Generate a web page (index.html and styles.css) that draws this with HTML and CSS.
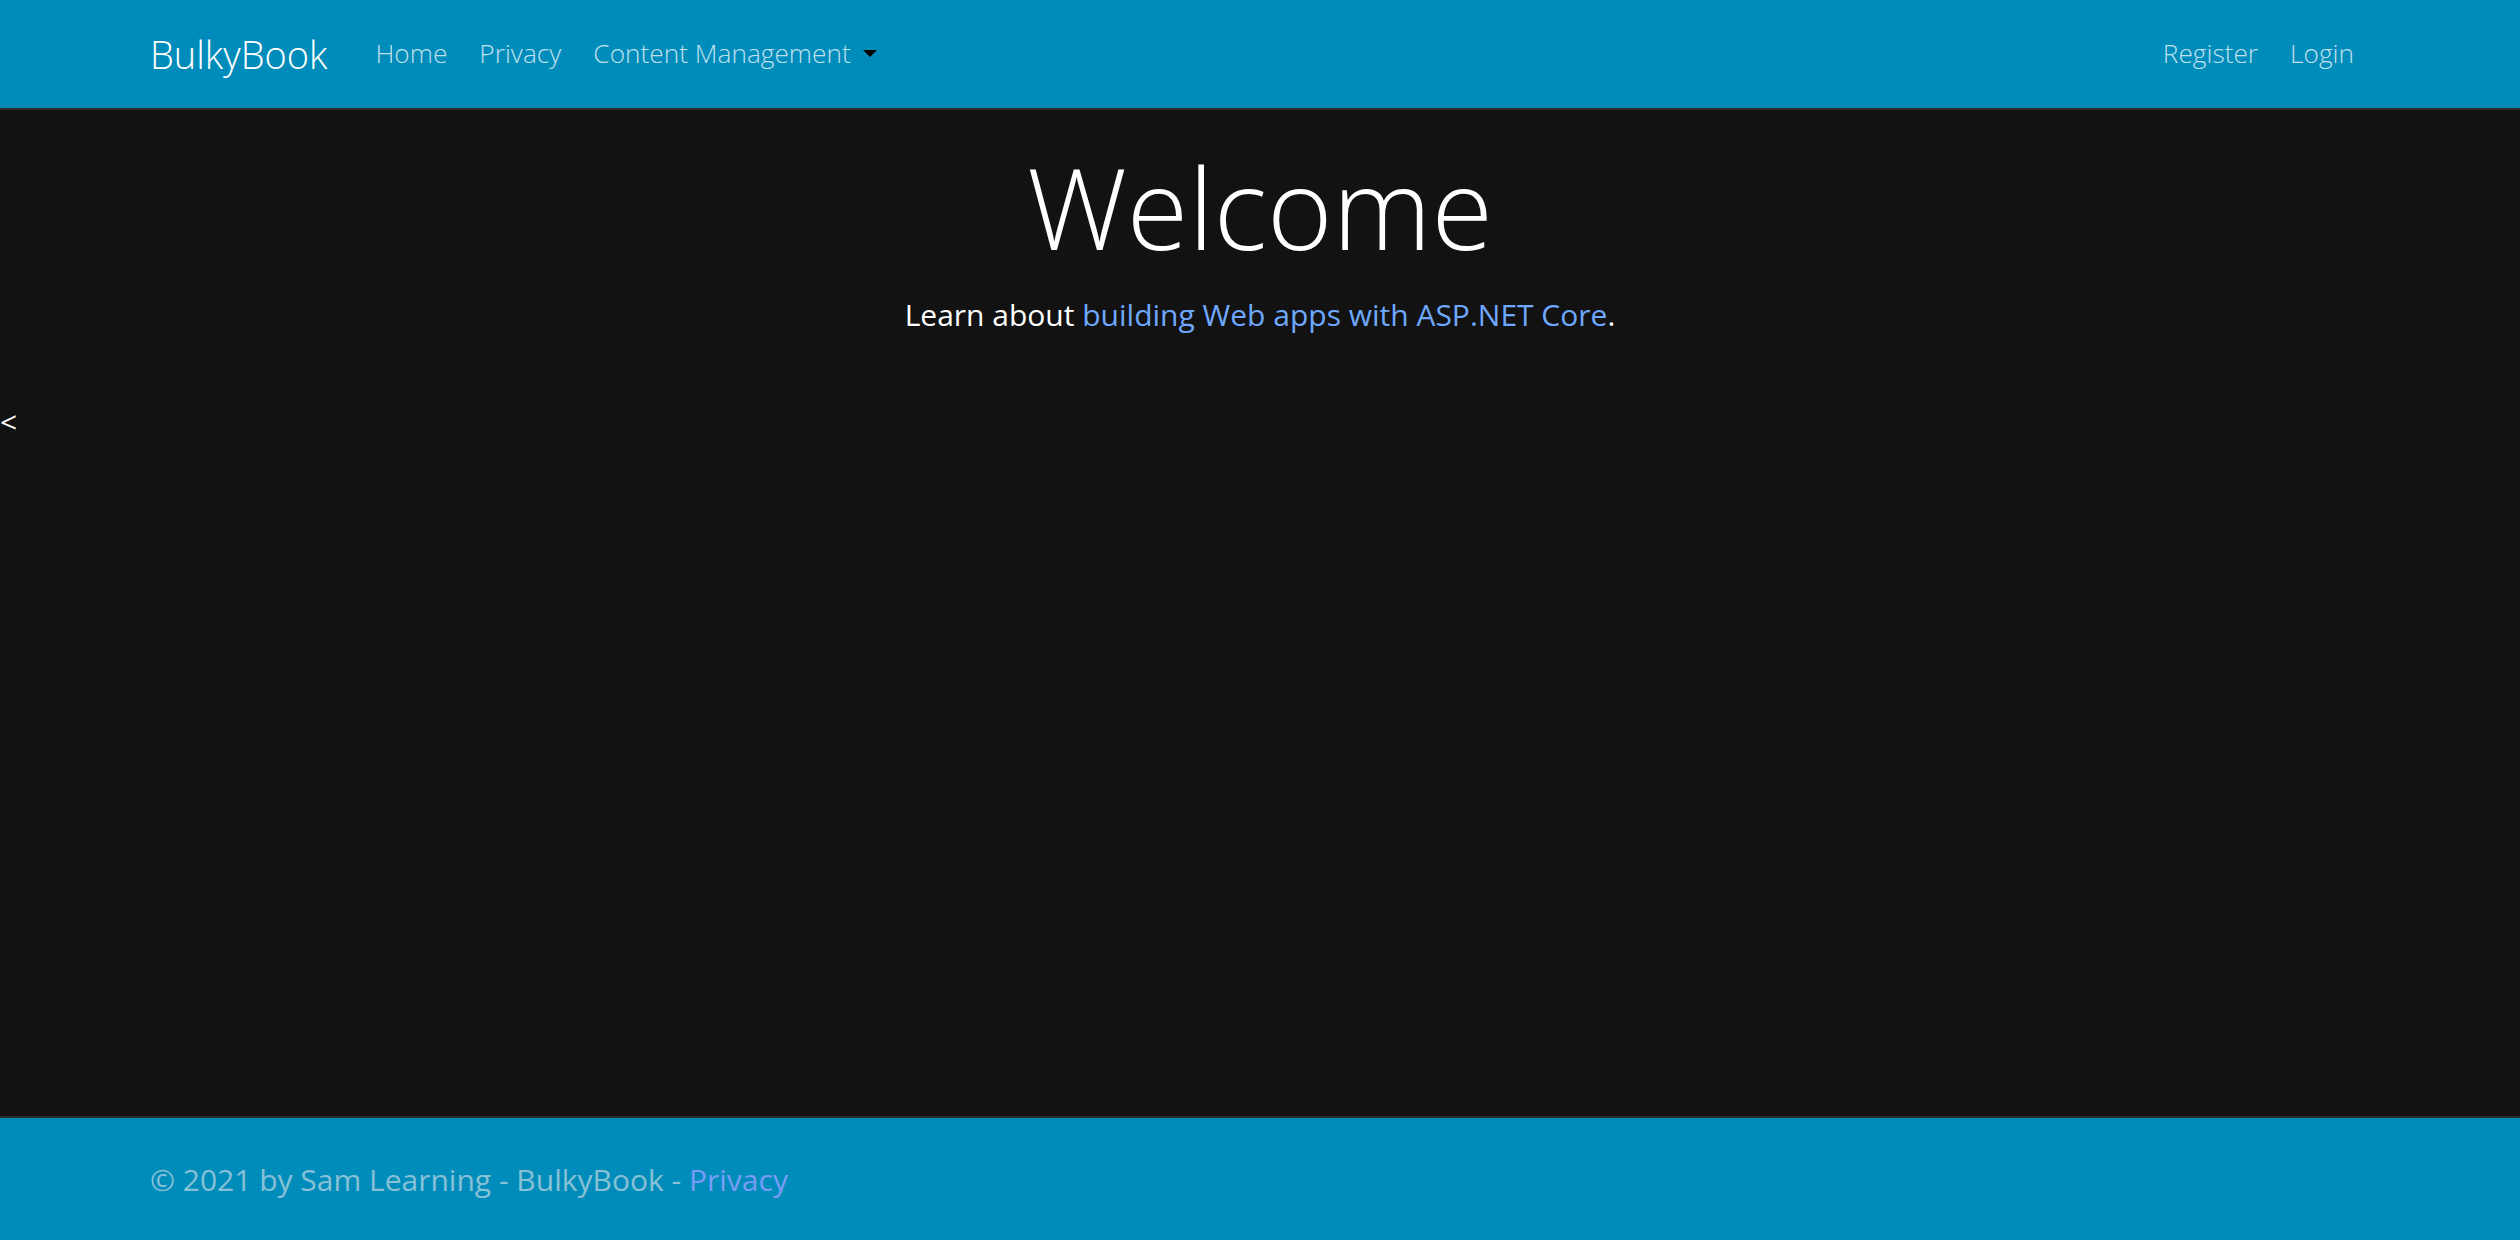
FILE: index.html
```html
<!DOCTYPE html>
<html lang="en">
<head>
<meta charset="utf-8">
<title>Home Page - BulkyBook</title>
<link rel="stylesheet" href="styles.css">
</head>
<body>
<header>
  <nav class="navbar">
    <div class="container nav-inner">
      <a class="brand" href="#">BulkyBook</a>
      <ul class="nav nav-left">
        <li><a class="nav-link" href="#">Home</a></li>
        <li><a class="nav-link" href="#">Privacy</a></li>
        <li><a class="nav-link dropdown-toggle" href="#">Content Management</a></li>
      </ul>
      <ul class="nav nav-right">
        <li><a class="nav-link" href="#">Register</a></li>
        <li><a class="nav-link" href="#">Login</a></li>
      </ul>
    </div>
  </nav>
</header>
<div class="container">
  <main class="main">
    <div class="text-center">
      <h1 class="display">Welcome</h1>
      <p class="lead-text">Learn about <a class="link" href="#">building Web apps with ASP.NET Core</a>.</p>
    </div>
  </main>
</div>
<div class="stray">&lt;</div>
<footer class="footer">
  <div class="container">&copy; 2021 by Sam Learning - BulkyBook - <a class="footer-link" href="#">Privacy</a></div>
</footer>
</body>
</html>
```
FILE: styles.css
```css
* { box-sizing: border-box; }
html, body { margin: 0; padding: 0; }
body {
  background: #121212;
  color: #fff;
  font-family: "Open Sans", "Liberation Sans", sans-serif;
  font-size: 30px;
  line-height: 1.5;
  min-height: 100vh;
  display: flex;
  flex-direction: column;
}
a { text-decoration: none; }
.container {
  width: 100%;
  max-width: 2280px;
  margin: 0 auto;
  padding: 0 30px;
}
.navbar {
  height: 110px;
  background: #008cba;
  border-bottom: 2px solid #2d2d2d;
  margin-bottom: 30px;
  font-weight: 300;
}
.nav-inner {
  height: 100%;
  display: flex;
  align-items: center;
}
.brand {
  color: #fff;
  font-size: 38px;
  line-height: 1.5;
  margin-right: 32px;
  white-space: nowrap;
}
.nav {
  list-style: none;
  margin: 0;
  padding: 0;
  display: flex;
  align-items: center;
}
.nav-left { flex: 1; }
.nav-link {
  display: block;
  padding: 0 16px;
  font-size: 26.25px;
  line-height: 1.5;
  color: rgba(255, 255, 255, 0.75);
  white-space: nowrap;
}
.dropdown-toggle::after {
  content: "";
  display: inline-block;
  margin-left: 12px;
  vertical-align: 0.255em;
  border-top: 0.3em solid #000;
  border-right: 0.3em solid transparent;
  border-left: 0.3em solid transparent;
  border-bottom: 0;
}
.main { padding-bottom: 32px; }
.text-center { text-align: center; }
.display {
  font-size: 112px;
  font-weight: 300;
  line-height: 1.2;
  margin: 0 0 18px;
}
.lead-text { margin: 0 0 30px; }
.link { color: #6ea8fe; }
.stray { line-height: 45px; }
.footer {
  margin-top: auto;
  background: #008cba;
  border-top: 2px solid #2c2c2c;
  line-height: 120px;
  font-size: 30px;
  color: #88c1d6;
  white-space: nowrap;
}
.footer .container { padding-top: 2px; }
.footer-link { color: #7a9cf5; }
```
